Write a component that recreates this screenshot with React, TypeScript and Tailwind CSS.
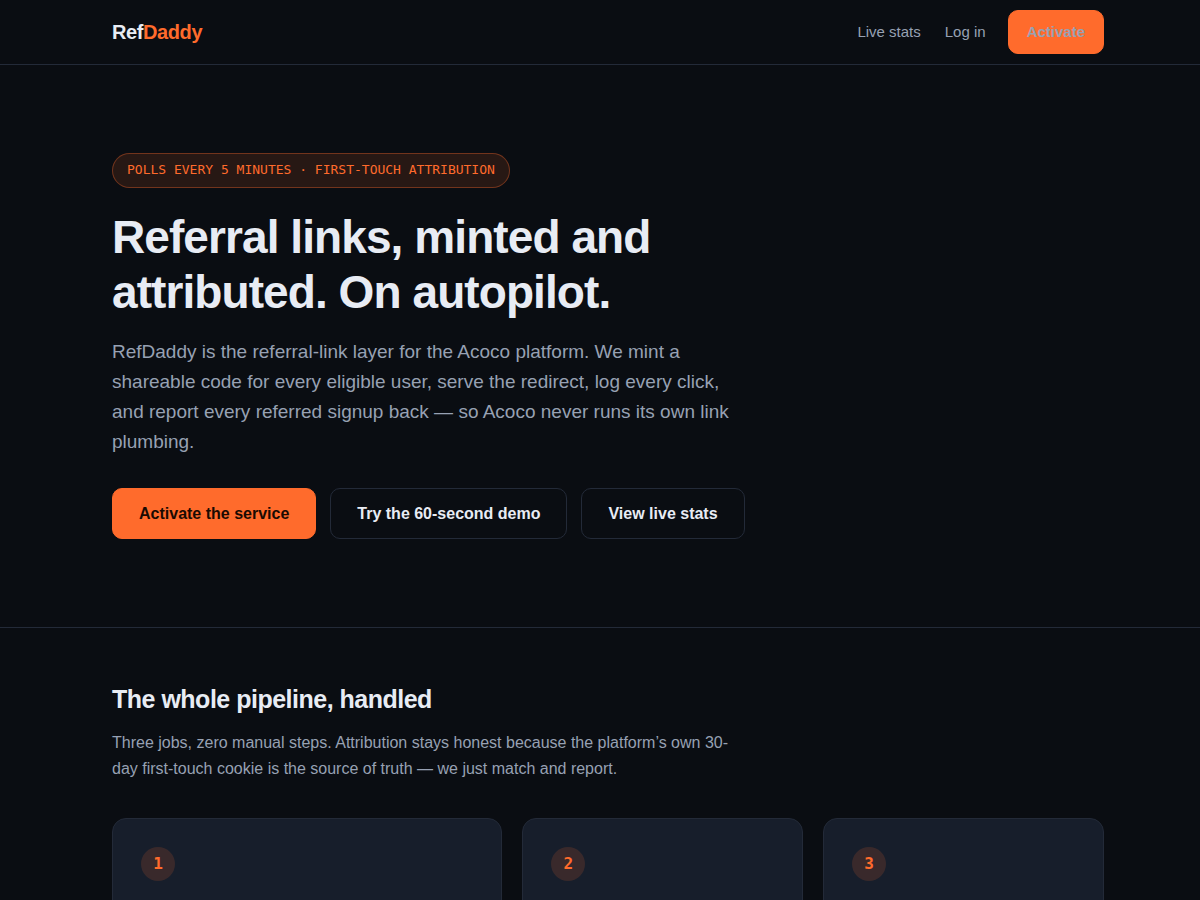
import React from "react";

const steps = [
  { n: 1, title: "Mint", body: "Every eligible user gets a shareable code, minted for them." },
  { n: 2, title: "Redirect & log", body: "We serve the redirect and log every click." },
  { n: 3, title: "Attribute", body: "Every referred signup is matched and reported back." },
];

const container = "mx-auto max-w-[1056px] pr-6 pl-10";
const button = "inline-flex items-center rounded-[10px] border font-semibold";

export default function App() {
  return (
    <div className="min-h-screen bg-[#0a0d12] font-['Liberation_Sans',Arial,sans-serif] text-base text-[#e8ecf4]">
      <header className="border-b border-[#232a38]">
        <div className={`${container} flex h-16 items-center justify-between`}>
          <a href="#home" className="text-xl font-bold tracking-[-0.4px]">
            Ref<span className="text-[#ff6b2c]">Daddy</span>
          </a>
          <nav className="flex items-center gap-6 text-[15px] text-[#97a1b3]">
            <a href="#stats">Live stats</a>
            <a href="#login">Log in</a>
            <a href="#activate" className={`${button} -ml-0.5 h-11 border-[#ff6b2c] bg-[#ff6b2c] px-[18px]`}>
              Activate
            </a>
          </nav>
        </div>
      </header>
      <main>
        <section className="border-b border-[#232a38]">
          <div className={`${container} py-22`}>
            <p className="inline-flex h-[35px] items-center rounded-full border border-[#ff6b2c]/35 bg-[#ff6b2c]/12 px-3.5 pb-0.5 font-['DejaVu_Sans_Mono',monospace] text-[13px] text-[#ff6b2c]">
              POLLS EVERY 5 MINUTES · FIRST-TOUCH ATTRIBUTION
            </p>
            <h1 className="mt-[22px] max-w-[640px] text-[46px] leading-[55px] font-bold tracking-[-0.92px]">
              Referral links, minted and attributed. On autopilot.
            </h1>
            <p className="mt-[17px] max-w-[620px] text-[19px] leading-[30px] text-[#97a1b3]">
              RefDaddy is the referral-link layer for the Acoco platform. We mint a shareable code for every
              eligible user, serve the redirect, log every click, and report every referred signup back — so Acoco
              never runs its own link plumbing.
            </p>
            <div className="mt-[31px] flex flex-wrap gap-3.5">
              <a href="#activate" className={`${button} h-[51px] border-[#ff6b2c] bg-[#ff6b2c] px-[26px] text-[#1a0a02]`}>
                Activate the service
              </a>
              <a href="#demo" className={`${button} h-[51px] border-[#232a38] px-[26px]`}>
                Try the 60-second demo
              </a>
              <a href="#stats" className={`${button} h-[51px] border-[#232a38] px-[26px]`}>
                View live stats
              </a>
            </div>
          </div>
        </section>
        <section className={`${container} py-14`}>
          <h2 className="text-[25px] leading-[30px] font-bold tracking-[-0.5px]">The whole pipeline, handled</h2>
          <p className="mt-4 max-w-[620px] leading-[26px] text-[#97a1b3]">
            Three jobs, zero manual steps. Attribution stays honest because the platform’s own 30-day first-touch
            cookie is the source of truth — we just match and report.
          </p>
          <div className="mt-9 grid grid-cols-[1.39fr_1fr_1fr] gap-5">
            {steps.map((step) => (
              <article key={step.n} className="rounded-[14px] border border-[#232a38] bg-[#171e2b] p-7">
                <span className="flex size-[34px] items-center justify-center rounded-full bg-[#ff6b2c]/15 font-['DejaVu_Sans_Mono',monospace] font-bold text-[#ff6b2c]">
                  {step.n}
                </span>
                <h3 className="mt-[13px] text-[19px] leading-[26px] font-bold">{step.title}</h3>
                <p className="mt-2 text-[15px] leading-6 text-[#97a1b3]">{step.body}</p>
              </article>
            ))}
          </div>
        </section>
      </main>
    </div>
  );
}
